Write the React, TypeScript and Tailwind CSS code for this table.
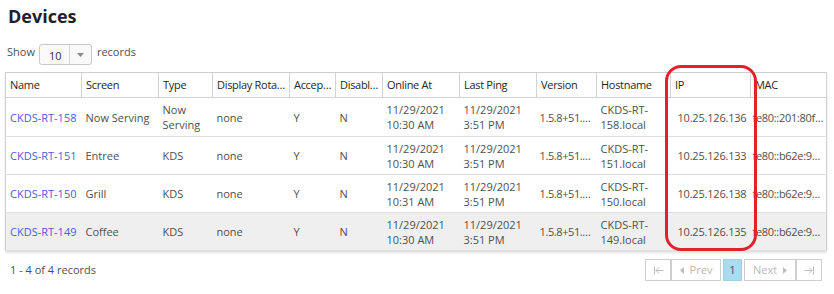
import React from 'react';

type Device = {
  name: string;
  screen: string;
  type: string;
  rotation: string;
  accepted: string;
  disabled: string;
  onlineAt: [string, string];
  lastPing: [string, string];
  version: string;
  hostname: [string, string];
  ip: string;
  mac: string;
};

const devices: Device[] = [
  {
    name: 'CKDS-RT-158',
    screen: 'Now Serving',
    type: 'Now Serving',
    rotation: 'none',
    accepted: 'Y',
    disabled: 'N',
    onlineAt: ['11/29/2021', '10:30 AM'],
    lastPing: ['11/29/2021', '3:51 PM'],
    version: '1.5.8+51.3f2a9c1',
    hostname: ['CKDS-RT-', '158.local'],
    ip: '10.25.126.136',
    mac: 'fe80::201:80ff:fe3a:1c22',
  },
  {
    name: 'CKDS-RT-151',
    screen: 'Entree',
    type: 'KDS',
    rotation: 'none',
    accepted: 'Y',
    disabled: 'N',
    onlineAt: ['11/29/2021', '10:30 AM'],
    lastPing: ['11/29/2021', '3:51 PM'],
    version: '1.5.8+51.3f2a9c1',
    hostname: ['CKDS-RT-', '151.local'],
    ip: '10.25.126.133',
    mac: 'fe80::b62e:99ff:fe41:7a10',
  },
  {
    name: 'CKDS-RT-150',
    screen: 'Grill',
    type: 'KDS',
    rotation: 'none',
    accepted: 'Y',
    disabled: 'N',
    onlineAt: ['11/29/2021', '10:31 AM'],
    lastPing: ['11/29/2021', '3:51 PM'],
    version: '1.5.8+51.3f2a9c1',
    hostname: ['CKDS-RT-', '150.local'],
    ip: '10.25.126.138',
    mac: 'fe80::b62e:99ff:fe41:7b02',
  },
  {
    name: 'CKDS-RT-149',
    screen: 'Coffee',
    type: 'KDS',
    rotation: 'none',
    accepted: 'Y',
    disabled: 'N',
    onlineAt: ['11/29/2021', '10:30 AM'],
    lastPing: ['11/29/2021', '3:51 PM'],
    version: '1.5.8+51.3f2a9c1',
    hostname: ['CKDS-RT-', '149.local'],
    ip: '10.25.126.135',
    mac: 'fe80::b62e:99ff:fe41:7c3d',
  },
];

const columns = [
  { title: 'Name', width: 'w-[76px]' },
  { title: 'Screen', width: 'w-[77px]' },
  { title: 'Type', width: 'w-[54px]' },
  { title: 'Display Rotation', width: 'w-[77px]' },
  { title: 'Accepted', width: 'w-[46px]' },
  { title: 'Disabled', width: 'w-[47px]' },
  { title: 'Online At', width: 'w-[77px]' },
  { title: 'Last Ping', width: 'w-[77px]' },
  { title: 'Version', width: 'w-[60px]' },
  { title: 'Hostname', width: 'w-[74px]' },
  { title: 'IP', width: 'w-[80px]' },
  { title: 'MAC', width: 'w-[76px]' },
];

const cell = 'px-[4px] align-middle';

const App: React.FC = () => {
  return (
    <div
      className="relative pl-[5px] pt-[4px] text-[11px] text-[#505050] bg-white min-h-[294px]"
      style={{ fontFamily: '"Open Sans", "Noto Sans", Arial, sans-serif' }}
    >
      <h1 className="ml-[3px] text-[18px] leading-[24px] font-bold text-[#1d1f2b]">Devices</h1>

      {/* Page size */}
      <div className="mt-[16px] flex items-center h-[21px] ml-[2px]">
        <span className="mr-[4px] -mt-[4px]">Show</span>
        <div className="flex h-[21px] w-[53px] border border-[#c9c9c9] rounded-[3px] bg-[#f9f9f9]">
          <span className="flex-1 pl-[9px] pt-[3px] leading-[16px] text-[#333]">10</span>
          <span className="w-[22px] border-l border-[#d6d6d6] flex items-center justify-center">
            <svg width="7" height="4" viewBox="0 0 7 4">
              <path d="M0 0h7L3.5 4z" fill="#8a8a8a" />
            </svg>
          </span>
        </div>
        <span className="ml-[5px] -mt-[4px]">records</span>
      </div>

      {/* Grid */}
      <table className="mt-[7px] table-fixed border-collapse w-[821px] border border-[#cfcfcf] shadow-[0_2px_2px_rgba(0,0,0,0.12)]">
        <colgroup>
          {columns.map((c) => (
            <col key={c.title} className={c.width} />
          ))}
        </colgroup>
        <thead>
          <tr className="h-[25px] border-b border-[#d3d3d3]">
            {columns.map((c) => (
              <th
                key={c.title}
                className="pl-[4px] pr-[2px] align-middle text-left font-normal text-[#262626] truncate tracking-[-0.3px] border-r border-[#d3d3d3]"
              >
                {c.title}
              </th>
            ))}
          </tr>
        </thead>
        <tbody className="leading-[15px]">
          {devices.map((d, i) => (
            <tr
              key={d.name}
              className={`${i === 0 ? 'h-[39px]' : 'h-[38px]'} border-b border-[#dedede] ${i === 3 ? 'bg-[#efefef]' : ''}`}
            >
              <td className={`${cell} text-[#4a5fd6] whitespace-nowrap`}>{d.name}</td>
              <td className={cell}>{d.screen}</td>
              <td className={cell}>{d.type}</td>
              <td className={cell}>{d.rotation}</td>
              <td className={cell}>{d.accepted}</td>
              <td className={cell}>{d.disabled}</td>
              <td className={cell}>
                {d.onlineAt[0]}
                <br />
                {d.onlineAt[1]}
              </td>
              <td className={cell}>
                {d.lastPing[0]}
                <br />
                {d.lastPing[1]}
              </td>
              <td className="pl-[3px] pr-[1px] align-middle truncate tracking-[-0.4px]">{d.version}</td>
              <td className={cell}>
                {d.hostname[0]}
                <br />
                {d.hostname[1]}
              </td>
              <td className="pl-[7px] pr-[2px] align-middle whitespace-nowrap tracking-[-0.2px]">{d.ip}</td>
              <td className="pl-[2px] pr-[2px] align-middle truncate tracking-[-0.3px]">{d.mac}</td>
            </tr>
          ))}
        </tbody>
      </table>

      {/* Footer */}
      <div className="mt-[8px] w-[821px] flex items-center justify-between">
        <span className="ml-[5px]">1 - 4 of 4 records</span>
        <div className="flex items-center mr-[4px] text-[#b9b9b9]">
          <button className="h-[22px] w-[26px] border border-[#cfcfcf] flex items-center justify-center">
            <svg width="11" height="9" viewBox="0 0 11 9" fill="none" stroke="#bdbdbd" strokeWidth="1">
              <path d="M1.5 0.5v8M3 4.5h7.5M3 4.5l3-3M3 4.5l3 3" />
            </svg>
          </button>
          <button className="h-[22px] w-[50px] border border-[#cfcfcf] flex items-center justify-center gap-[6px]">
            <svg width="4" height="7" viewBox="0 0 4 7">
              <path d="M4 0v7L0 3.5z" fill="#bdbdbd" />
            </svg>
            <span>Prev</span>
          </button>
          <span className="ml-[2px] h-[22px] w-[19px] border border-[#9fcfe0] bg-[#a9dcef] text-[#3b5568] flex items-center justify-center">
            1
          </span>
          <button className="ml-[2px] h-[22px] w-[52px] border border-[#cfcfcf] flex items-center justify-center gap-[6px]">
            <span>Next</span>
            <svg width="4" height="7" viewBox="0 0 4 7">
              <path d="M0 0v7l4-3.5z" fill="#bdbdbd" />
            </svg>
          </button>
          <button className="h-[22px] w-[26px] border border-[#cfcfcf] flex items-center justify-center">
            <svg width="11" height="9" viewBox="0 0 11 9" fill="none" stroke="#bdbdbd" strokeWidth="1">
              <path d="M9.5 0.5v8M0.5 4.5H8M8 4.5l-3-3M8 4.5l-3 3" />
            </svg>
          </button>
        </div>
      </div>

      {/* Annotation around the IP column */}
      <div className="absolute left-[665px] top-[65px] w-[92px] h-[186px] border-[3px] border-[#e3202b] rounded-[16px] pointer-events-none" />
    </div>
  );
};

export default App;
